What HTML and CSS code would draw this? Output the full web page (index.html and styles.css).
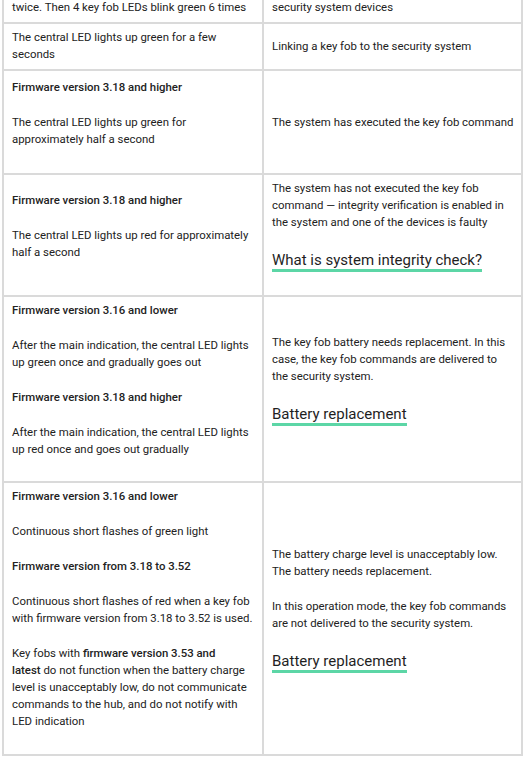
FILE: index.html
```html
<!DOCTYPE html>
<html lang="en">
<head>
<meta charset="utf-8">
<title>Key fob indication</title>
<link rel="stylesheet" href="styles.css">
</head>
<body>
<table class="ind">
  <colgroup><col class="c-left"><col class="c-right"></colgroup>
  <tbody>
    <tr class="r-a">
      <td class="cl">The central LED lights up red, green and orange<br>twice. Then 4 key fob LEDs blink green 6 times</td>
      <td class="cr">Removing the key fob from the list of<br>security system devices</td>
    </tr>
    <tr class="r-b">
      <td class="cl">The central LED lights up green for a few seconds</td>
      <td class="cr">Linking a key fob to the security system</td>
    </tr>
    <tr class="r-c">
      <td class="cl">
        <p class="fw">Firmware version 3.18 and higher</p>
        <p>The central LED lights up green for approximately half a second</p>
      </td>
      <td class="cr">The system has executed the key fob command</td>
    </tr>
    <tr>
      <td class="cl">
        <p class="fw">Firmware version 3.18 and higher</p>
        <p>The central LED lights up red for approximately half a second</p>
      </td>
      <td class="cr">
        <p>The system has not executed the key fob command — integrity verification is enabled in the system and one of the devices is faulty</p>
        <p class="lk"><a href="#">What is system integrity check?</a></p>
      </td>
    </tr>
    <tr>
      <td class="cl">
        <p class="fw">Firmware version 3.16 and lower</p>
        <p>After the main indication, the central LED lights up green once and gradually goes out</p>
        <p class="fw">Firmware version 3.18 and higher</p>
        <p>After the main indication, the central LED lights up red once and goes out gradually</p>
      </td>
      <td class="cr">
        <p>The key fob battery needs replacement. In this case, the key fob commands are delivered to the security system.</p>
        <p class="lk"><a href="#">Battery replacement</a></p>
      </td>
    </tr>
    <tr class="r-f">
      <td class="cl">
        <p class="fw">Firmware version 3.16 and lower</p>
        <p>Continuous short flashes of green light</p>
        <p class="fw">Firmware version from 3.18 to 3.52</p>
        <p>Continuous short flashes of red when a key fob with firmware version from 3.18 to 3.52 is used.</p>
        <p>Key fobs with <b>firmware version 3.53 and<br>latest</b> do not function when the battery charge level is unacceptably low, do not communicate commands to the hub, and do not notify with LED indication</p>
      </td>
      <td class="cr">
        <p>The battery charge level is unacceptably low. The battery needs replacement.</p>
        <p>In this operation mode, the key fob commands are not delivered to the security system.</p>
        <p class="lk"><a href="#">Battery replacement</a></p>
      </td>
    </tr>
  </tbody>
</table>
</body>
</html>
```
FILE: styles.css
```css
html, body {
  margin: 0;
  padding: 0;
  background: #ffffff;
}
body {
  font-family: Roboto, "Liberation Sans", Arial, sans-serif;
  font-size: 11.4px;
  line-height: 17px;
  color: #222222;
}
.ind {
  table-layout: fixed;
  border-collapse: separate;
  border-spacing: 0;
  width: 521px;
  margin: -26px 0 0 2px;
  border-top: 2px solid #dadada;
  border-left: 2px solid #dadada;
}
.c-left { width: 260px; }
.c-right { width: 259px; }
.ind td {
  border-right: 2px solid #dadada;
  border-bottom: 2px solid #dadada;
  vertical-align: middle;
  padding: 5px 6px 5px 8px;
}
.ind p {
  margin: 0 0 18px;
}
.fw {
  font-weight: 500;
}
.ind b {
  font-weight: 500;
}
.r-a td {
  height: 36px;
}
.r-b td,
.r-f td {
  padding-bottom: 6px;
}
.r-c td {
  height: 92px;
}
.lk {
  font-size: 15px;
  line-height: 23px;
}
.lk a {
  color: #1f1f1f;
  text-decoration: none;
  border-bottom: 3px solid #5cd6a6;
}
```
